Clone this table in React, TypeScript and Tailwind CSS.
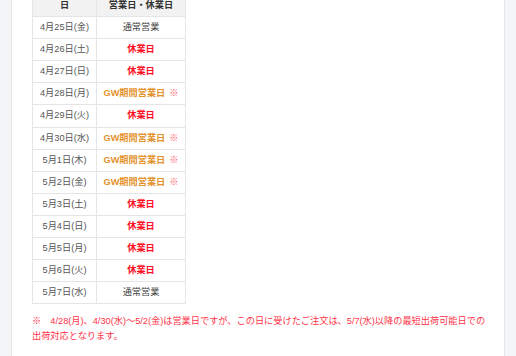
import React from 'react'

type Kind = 'normal' | 'closed' | 'gw'

const rows: { date: string; kind: Kind }[] = [
  { date: '4月25日(金)', kind: 'normal' },
  { date: '4月26日(土)', kind: 'closed' },
  { date: '4月27日(日)', kind: 'closed' },
  { date: '4月28日(月)', kind: 'gw' },
  { date: '4月29日(火)', kind: 'closed' },
  { date: '4月30日(水)', kind: 'gw' },
  { date: '5月1日(木)', kind: 'gw' },
  { date: '5月2日(金)', kind: 'gw' },
  { date: '5月3日(土)', kind: 'closed' },
  { date: '5月4日(日)', kind: 'closed' },
  { date: '5月5日(月)', kind: 'closed' },
  { date: '5月6日(火)', kind: 'closed' },
  { date: '5月7日(水)', kind: 'normal' },
]

function Status({ kind }: { kind: Kind }) {
  if (kind === 'closed') return <span className="font-bold text-[#ff0f1f]">休業日</span>
  if (kind === 'gw')
    return (
      <span className="font-bold text-[#e3922c]">
        GW期間営業日<span className="ml-[4px] text-[#ff5a6a]">※</span>
      </span>
    )
  return <span className="text-[#444]">通常営業</span>
}

export default function App() {
  return (
    <div
      className="flex h-[356px] w-[516px] overflow-hidden bg-[#f4f5f7]"
      style={{ fontFamily: '"Liberation Sans", "Noto Sans CJK JP", sans-serif' }}
    >
      <div className="ml-[11px] w-[494px] shrink-0 border-x border-[#e6e7ea] bg-white px-[20px]">
        <div className="-mt-[6px]">
          <table className="w-[153px] table-fixed border-collapse whitespace-nowrap text-center text-[9.2px] leading-[13.1px]">
            <colgroup>
              <col className="w-[64px]" />
              <col className="w-[89px]" />
            </colgroup>
            <thead>
              <tr className="bg-[#f2f2f2]">
                <th className="border border-[#e5e5e5] py-[4px] font-bold text-[#333]">日</th>
                <th className="border border-[#e5e5e5] py-[4px] font-bold text-[#333]">営業日・休業日</th>
              </tr>
            </thead>
            <tbody>
              {rows.map((r) => (
                <tr key={r.date}>
                  <td className="border border-[#e5e5e5] py-[4px] text-[#555]">{r.date}</td>
                  <td className="border border-[#e5e5e5] py-[4px]">
                    <Status kind={r.kind} />
                  </td>
                </tr>
              ))}
            </tbody>
          </table>
        </div>

        <p className="mt-[10px] whitespace-nowrap text-[9.2px] leading-[15px] text-[#ff3348]">
          ※　4/28(月)、4/30(水)～5/2(金)は営業日ですが、この日に受けたご注文は、5/7(水)以降の最短出荷可能日での
          <br />
          出荷対応となります。
        </p>
        <p className="mt-[11px] text-[9.2px] leading-[15px] text-[#555]">
          休業中もWEBでのご注文は24時間受付けております。
        </p>
      </div>
    </div>
  )
}
